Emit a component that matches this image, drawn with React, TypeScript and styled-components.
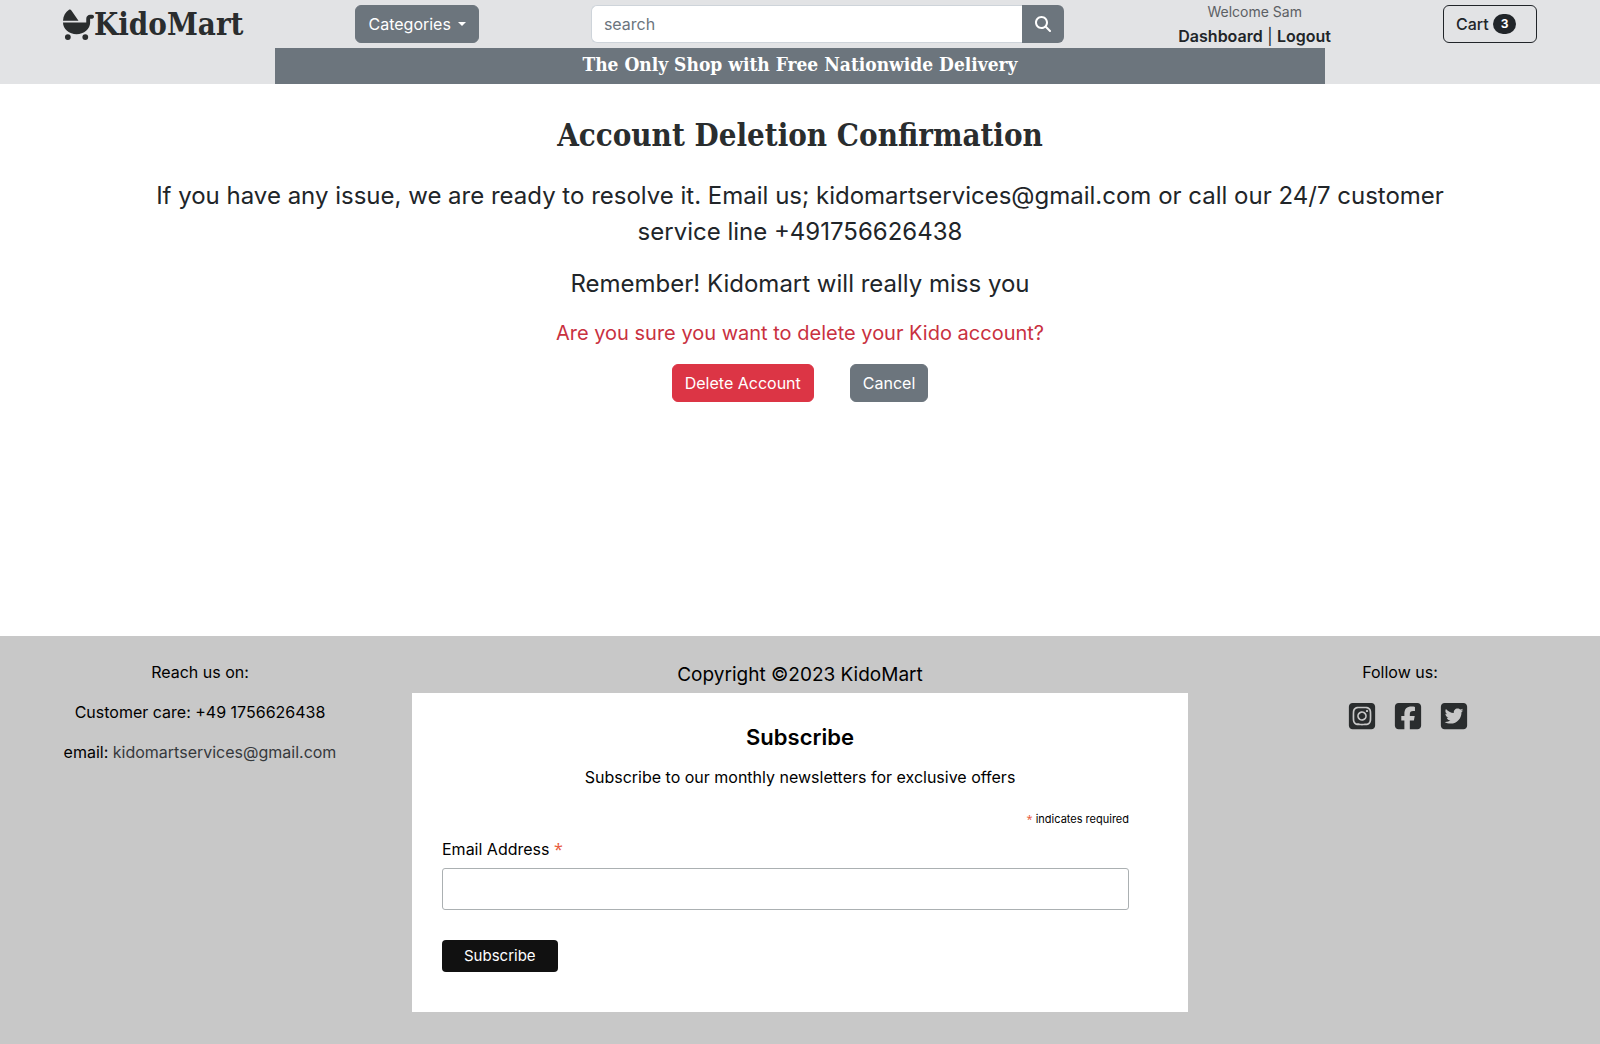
import React from "react";
import styled, { createGlobalStyle } from "styled-components";
import {
  FaBabyCarriage,
  FaMagnifyingGlass,
  FaSquareFacebook,
  FaSquareInstagram,
  FaSquareTwitter,
} from "react-icons/fa6";

const sans = `Inter, "Noto Sans", sans-serif`;
const slab = `"DejaVu Serif Condensed", "DejaVu Serif", serif`;

const GlobalStyle = createGlobalStyle`
  *, *::before, *::after { box-sizing: border-box; }
  body {
    margin: 0;
    background: #fff;
    color: #212529;
    font: 400 16px/24px ${sans};
  }
  h1, h2, p { margin: 0; }
  a { color: inherit; text-decoration: none; }
  button, input { font: inherit; }
`;

const Page = styled.div`
  display: flex;
  flex-direction: column;
  min-height: 100vh;
`;

const Header = styled.header`
  background: #e2e3e5;
`;

const Nav = styled.nav`
  display: grid;
  grid-template-columns: auto auto 1fr auto auto;
  gap: 7vw;
  height: 48px;
  padding: 0 63px;
`;

const Logo = styled.a`
  display: flex;
  align-items: center;
  color: #2a2d2e;
  font: 700 31px/46px ${slab};
  white-space: nowrap;
`;

const buttonColors = {
  danger: { background: "#dc3545", border: "#dc3545", text: "#fff" },
  secondary: { background: "#6c757d", border: "#6c757d", text: "#fff" },
  outline: { background: "transparent", border: "#212529", text: "#212529" },
};

const Button = styled.button<{ $kind: keyof typeof buttonColors }>`
  display: inline-flex;
  align-items: center;
  height: 38px;
  padding: 0 12px;
  border: 1px solid ${(p) => buttonColors[p.$kind].border};
  border-radius: 6px;
  background: ${(p) => buttonColors[p.$kind].background};
  color: ${(p) => buttonColors[p.$kind].text};
  white-space: nowrap;
  cursor: pointer;
`;

const NavButton = styled(Button)`
  margin-top: 5px;
`;

const CartButton = styled(NavButton)`
  gap: 4px;
  width: 94px;
  font-weight: 500;
`;

const Caret = styled.span`
  margin-left: 7px;
  border: 4px solid transparent;
  border-top-color: currentColor;
  border-bottom: 0;
`;

const Badge = styled.span`
  padding: 4px 8px;
  border-radius: 10px;
  background: #212529;
  color: #fff;
  font: 700 12px/12px ${sans};
`;

const SearchForm = styled.form`
  display: flex;
  margin-top: 5px;
  padding-right: 2px;
  height: 38px;
`;

const SearchInput = styled.input`
  flex: 1;
  min-width: 0;
  padding: 0 12px;
  border: 1px solid #ced4da;
  border-right: 0;
  border-radius: 6px 0 0 6px;
  background: #fff;
  color: #212529;
  &::placeholder { color: #6c757d; opacity: 1; }
`;

const SearchButton = styled.button`
  display: grid;
  place-items: center;
  width: 42px;
  padding: 0;
  border: 0;
  border-radius: 0 6px 6px 0;
  background: #6c757d;
  color: #fff;
  cursor: pointer;
`;

const Account = styled.div`
  text-align: center;
  line-height: 24px;
  white-space: nowrap;
`;

const Welcome = styled.p`
  color: #5c6064;
  font-size: 14px;
`;

const AccountLink = styled.a`
  font-weight: 600;
`;

const Banner = styled.p`
  width: calc(66% - 6px);
  margin: 0 auto;
  padding: 4px 0 8px;
  background: #6c757d;
  color: #fff;
  text-align: center;
  font: 700 19px/24px ${slab};
`;

const Main = styled.main`
  flex: 1;
  display: flex;
  flex-direction: column;
  align-items: center;
  gap: 16px;
  padding: 32px 144px 48px;
  text-align: center;
`;

const Title = styled.h1`
  padding-bottom: 8px;
  color: #2a2d2e;
  font: 700 31px/38px ${slab};
`;

const Lead = styled.p`
  font-size: 24px;
  line-height: 36px;
`;

const Warning = styled.p`
  padding: 3px 0;
  color: #c9313f;
  font-size: 20px;
  line-height: 24px;
`;

const Actions = styled.div`
  display: flex;
  gap: 36px;
`;

const Footer = styled.footer`
  display: grid;
  grid-template-columns: 1fr 2fr 1fr;
  padding: 24px 0 32px;
  background: #c8c8c8;
  color: #000;
  text-align: center;
`;

const FooterColumn = styled.div`
  display: flex;
  flex-direction: column;
  align-items: center;
  gap: 16px;
`;

const MailLink = styled.a`
  color: #36393c;
`;

const Socials = styled.div`
  display: flex;
  gap: 16px;
  padding: 1px 0 0 16px;
  color: #2a2d2e;
  font-size: 30px;
  line-height: 30px;
  a { display: flex; }
`;

const Newsletter = styled.div`
  padding: 0 12px;
`;

const Copyright = styled.p`
  padding-bottom: 3px;
  font-size: 19px;
  line-height: 30px;
`;

const Card = styled.form`
  display: flex;
  flex-direction: column;
  align-items: flex-start;
  padding: 28px 59px 40px 30px;
  background: #fff;
`;

const CardIntro = styled.div`
  align-self: stretch;
  display: grid;
  gap: 12px;
  padding-left: 29px;
`;

const CardTitle = styled.h2`
  font: 600 22px/32px ${sans};
`;

const RequiredNote = styled.p`
  align-self: flex-end;
  padding-top: 18px;
  font-size: 11px;
  line-height: 24px;
`;

const Star = styled.span`
  color: #e85c41;
  font-family: "Noto Sans", sans-serif;
`;

const FieldLabel = styled.label`
  padding: 6px 0 7px;
`;

const EmailInput = styled.input`
  width: 100%;
  height: 42px;
  padding: 0 8px;
  border: 1px solid #abb0b2;
  border-radius: 3px;
  background: #fff;
`;

const SubscribeButton = styled.button`
  height: 32px;
  margin-top: 30px;
  padding: 0 22px;
  border: 0;
  border-radius: 4px;
  background: #111;
  color: #fff;
  font-size: 15px;
  cursor: pointer;
`;

const email = "kidomartservices@gmail.com";

const socials = [
  { name: "Instagram", Icon: FaSquareInstagram },
  { name: "Facebook", Icon: FaSquareFacebook },
  { name: "Twitter", Icon: FaSquareTwitter },
];

export default function App() {
  return (
    <Page>
      <GlobalStyle />
      <Header>
        <Nav>
          <Logo href="#">
            <FaBabyCarriage aria-hidden />
            KidoMart
          </Logo>
          <NavButton type="button" $kind="secondary">
            Categories
            <Caret />
          </NavButton>
          <SearchForm role="search">
            <SearchInput type="search" placeholder="search" aria-label="Search products" />
            <SearchButton type="submit" aria-label="Search">
              <FaMagnifyingGlass />
            </SearchButton>
          </SearchForm>
          <Account>
            <Welcome>Welcome Sam</Welcome>
            <AccountLink href="#">Dashboard</AccountLink> | <AccountLink href="#">Logout</AccountLink>
          </Account>
          <CartButton type="button" $kind="outline">
            Cart <Badge>3</Badge>
          </CartButton>
        </Nav>
        <Banner>The Only Shop with Free Nationwide Delivery</Banner>
      </Header>

      <Main>
        <Title>Account Deletion Confirmation</Title>
        <Lead>
          If you have any issue, we are ready to resolve it. Email us;{" "}
          <a href={`mailto:${email}`}>{email}</a> or call our 24/7 customer service line
          +491756626438
        </Lead>
        <Lead>Remember! Kidomart will really miss you</Lead>
        <Warning>Are you sure you want to delete your Kido account?</Warning>
        <Actions>
          <Button type="button" $kind="danger">Delete Account</Button>
          <Button type="button" $kind="secondary">Cancel</Button>
        </Actions>
      </Main>

      <Footer>
        <FooterColumn>
          <p>Reach us on:</p>
          <p>Customer care: +49 1756626438</p>
          <p>
            email: <MailLink href={`mailto:${email}`}>{email}</MailLink>
          </p>
        </FooterColumn>
        <Newsletter>
          <Copyright>Copyright ©2023 KidoMart</Copyright>
          <Card>
            <CardIntro>
              <CardTitle>Subscribe</CardTitle>
              <p>Subscribe to our monthly newsletters for exclusive offers</p>
            </CardIntro>
            <RequiredNote>
              <Star>*</Star> indicates required
            </RequiredNote>
            <FieldLabel htmlFor="subscriber-email">
              Email Address <Star>*</Star>
            </FieldLabel>
            <EmailInput id="subscriber-email" type="email" required />
            <SubscribeButton type="submit">Subscribe</SubscribeButton>
          </Card>
        </Newsletter>
        <FooterColumn>
          <p>Follow us:</p>
          <Socials>
            {socials.map(({ name, Icon }) => (
              <a key={name} href="#" aria-label={name}>
                <Icon />
              </a>
            ))}
          </Socials>
        </FooterColumn>
      </Footer>
    </Page>
  );
}
